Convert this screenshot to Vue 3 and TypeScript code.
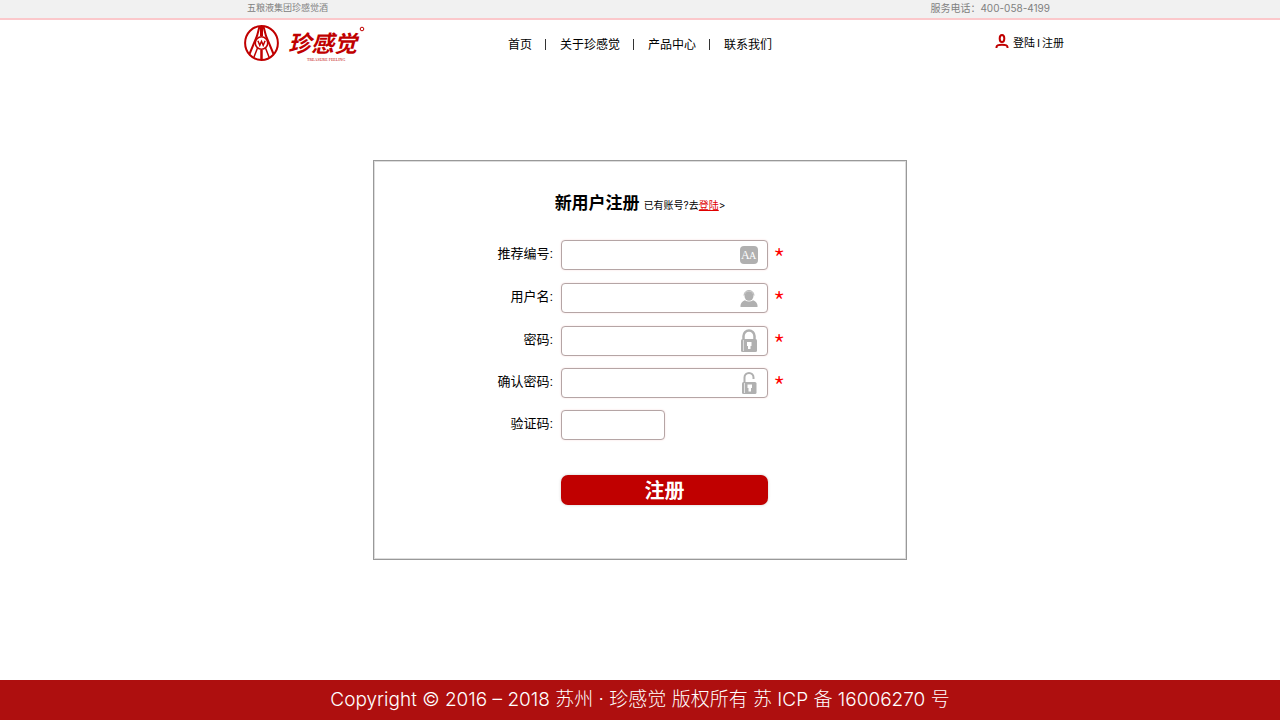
<script setup lang="ts">
import { reactive } from 'vue'

type Icon = 'code' | 'user' | 'lock' | 'unlock'
interface Field {
  id: string
  label: string
  type: string
  icon?: Icon
}

const navItems: string[] = ['首页', '关于珍感觉', '产品中心', '联系我们']

const fields: Field[] = [
  { id: 'referrer', label: '推荐编号:', type: 'text', icon: 'code' },
  { id: 'username', label: '用户名:', type: 'text', icon: 'user' },
  { id: 'password', label: '密码:', type: 'password', icon: 'lock' },
  { id: 'confirm', label: '确认密码:', type: 'password', icon: 'unlock' },
  { id: 'captcha', label: '验证码:', type: 'text' },
]

const form = reactive<Record<string, string>>({
  referrer: '',
  username: '',
  password: '',
  confirm: '',
  captcha: '',
})
</script>

<template>
  <div class="page">
    <div class="topbar">
      <span>五粮液集团珍感觉酒</span>
      <span>服务电话：400-058-4199</span>
    </div>

    <header class="header">
      <a class="logo" href="#" aria-label="珍感觉">
        <svg class="emblem" viewBox="0 0 36 38" aria-hidden="true">
          <g fill="none" stroke="#c00000">
            <ellipse cx="17.5" cy="19" rx="16.4" ry="17" stroke-width="2" />
            <path d="M15.500 2.500 13 12 5.500 30M19.500 2.500 22 12 29.500 30" stroke-width="2" />
            <path d="M17.500 3V12" stroke-width="3" />
            <path d="M13.500 24 10 33M21.500 24 25 33" stroke-width="1.500" />
            <path d="M17.500 26V35" stroke-width="2.500" />
            <circle cx="17.500" cy="19" r="6.200" stroke-width="1.500" fill="#fff" />
            <path d="m13.900 16.800 1.900 4.500 1.700-4 1.700 4 1.900-4.500" stroke-width="1.500" />
          </g>
        </svg>
        <svg class="wordmark" viewBox="0 0 78 38" aria-hidden="true">
          <text class="brand" x="1" y="28">珍感觉</text>
          <text class="brand-en" x="20" y="37">TREASURE FEELING</text>
          <circle cx="75" cy="5" r="1.800" fill="none" stroke="#c00000" stroke-width="1" />
        </svg>
      </a>
      <nav class="nav">
        <a v-for="item in navItems" :key="item" href="#">{{ item }}</a>
      </nav>
      <div class="account">
        <svg viewBox="0 0 14 15" aria-hidden="true">
          <g fill="none" stroke="#c00000" stroke-width="2">
            <ellipse cx="7" cy="4.500" rx="2.300" ry="3.500" />
            <path d="M1.500 14v-1Q1.700 10.800 7 10.800t5.500 2.200v1" />
          </g>
        </svg>
        <a href="#">登陆</a><span>I</span><a href="#">注册</a>
      </div>
    </header>

    <main class="main">
      <form class="card" @submit.prevent>
        <div class="heading">
          <h1>新用户注册</h1>
          <p>已有账号?去<a href="#">登陆</a>&gt;</p>
        </div>

        <div v-for="field in fields" :key="field.id" class="row">
          <label :for="field.id">{{ field.label }}</label>
          <div class="control" :class="{ short: !field.icon }">
            <input :id="field.id" v-model="form[field.id]" :type="field.type" :required="!!field.icon" />
            <svg v-if="field.icon" class="icon" viewBox="0 0 18 24" aria-hidden="true">
              <template v-if="field.icon === 'code'">
                <rect y="3" width="18" height="18" rx="4" fill="#b0b0b0" />
                <text x="1" y="16" class="big-a">A</text>
                <text x="9" y="16" class="small-a">A</text>
              </template>
              <g v-else-if="field.icon === 'user'" fill="#b0b0b0">
                <ellipse cx="9" cy="10" rx="4.500" ry="4.800" />
                <path d="M4 9.500Q4.500 4.600 9 4.600t5 4.900" fill="none" stroke="#b0b0b0" />
                <path d="M.5 21v-1.500q.2-3.200 4.300-5.300Q9 17 13.200 14.200q4.100 2.100 4.300 5.300V21Z" />
              </g>
              <g v-else-if="field.icon === 'lock'">
                <path d="M3.500 10.500V7a5.500 5.500 0 0 1 11 0v3.500" fill="none" stroke="#b0b0b0" stroke-width="2.500" />
                <rect x="1" y="10" width="16" height="13" rx="1.500" fill="#b0b0b0" />
                <path d="M3.500 11v11" stroke="#ddd" />
                <path d="M7 13h4.500v4h-1v3h-2.500v-3H7Z" fill="#fff" />
              </g>
              <g v-else>
                <path d="M4.500 12V6.500a4.500 4.500 0 0 1 9 0V8" fill="none" stroke="#b0b0b0" stroke-width="2" />
                <rect x="2" y="11" width="14.500" height="12" rx="1.500" fill="#b0b0b0" />
                <path d="M4.500 12v10" stroke="#e5e5e5" />
                <path d="M7.500 13.500H12V17h-1v3.500H8.500V17h-1Z" fill="#fff" />
              </g>
            </svg>
          </div>
          <span v-if="field.icon" class="required">*</span>
        </div>

        <button class="submit" type="submit">注册</button>
      </form>
    </main>

    <footer class="footer">Copyright © 2016 – 2018 苏州 · 珍感觉 版权所有 苏 ICP 备 16006270 号</footer>
  </div>
</template>

<style>
body {
  margin: 0;
  background: #fff;
}
</style>

<style scoped>
.page {
  display: flex;
  flex-direction: column;
  min-height: 100vh;
  color: #000;
  font-family: "Liberation Sans", "Noto Sans CJK SC", sans-serif;
  font-size: 12px;
}
a {
  color: inherit;
  text-decoration: none;
}
.topbar {
  display: flex;
  justify-content: space-between;
  box-sizing: border-box;
  height: 20px;
  padding: 0 calc(50% - 410px) 0 calc(50% - 393px);
  border-bottom: 2px solid #fbc8cb;
  background: #f1f1f1;
  color: #808080;
  font-family: Inter, "Noto Sans CJK SC", sans-serif;
  font-size: 10px;
  line-height: 16px;
}
.topbar span:first-child {
  font-size: 9px;
}
.header {
  display: grid;
  grid-template-columns: 1fr auto 1fr;
  align-items: center;
  height: 48px;
  padding: 0 calc(50% - 424px) 0 calc(50% - 396px);
}
.logo {
  display: flex;
  gap: 7px;
  margin-top: -3px;
}
.emblem {
  width: 36px;
  height: 38px;
}
.wordmark {
  width: 78px;
  height: 38px;
}
.brand {
  fill: #c00000;
  font-family: "Liberation Sans", "Noto Sans CJK SC", sans-serif;
  font-size: 23px;
  font-style: italic;
  font-weight: 700;
}
.brand-en {
  fill: #c00000;
  font-family: "Liberation Serif", serif;
  font-size: 4px;
}
.nav {
  display: flex;
  margin: -2px 28px 0 0;
}
.nav a + a::before {
  content: "";
  display: inline-block;
  width: 1px;
  height: 11px;
  margin: 0 14px 0 13px;
  background: #333;
  vertical-align: -1px;
}
.account {
  display: flex;
  align-items: center;
  justify-content: flex-end;
  gap: 2px;
  margin-top: -3px;
  font-size: 11px;
}
.account svg {
  width: 14px;
  height: 15px;
  margin: -2px 2px 0 0;
}
.account a {
  line-height: 16px;
}
.main {
  flex: 1;
  padding: 92px 24px 120px;
}
.card {
  box-sizing: border-box;
  max-width: 534px;
  min-height: 400px;
  margin: 0 auto;
  padding: 29px 0 52px;
  border: 1px solid #999;
  box-shadow: inset 0 0 0 1px #ddd;
}
.heading {
  display: flex;
  align-items: baseline;
  justify-content: center;
  gap: 4px;
  height: 50px;
}
h1 {
  margin: 0;
  font-size: 17px;
  line-height: 28px;
}
.heading p {
  margin: 0;
  font-family: Inter, "Noto Sans CJK SC", sans-serif;
  font-size: 10px;
}
.heading p a {
  color: #e00000;
  text-decoration: underline;
}
.row {
  display: grid;
  grid-template-columns: 179px 207px auto;
  column-gap: 8px;
  height: 30px;
  margin-bottom: 13px;
}
.row:nth-of-type(n + 4) {
  margin-bottom: 12px;
}
label {
  font-size: 13px;
  line-height: 28px;
  text-align: right;
}
.control {
  position: relative;
}
.short {
  width: 104px;
}
input {
  box-sizing: border-box;
  width: 100%;
  height: 30px;
  padding: 0 32px 0 8px;
  border: 1px solid #b5a5a5;
  border-radius: 4px;
  background: #fff;
  box-shadow: 0 0 2px #f5dada;
  font: inherit;
}
.short input {
  padding-right: 8px;
}
.icon {
  position: absolute;
  top: 3px;
  right: 10px;
  width: 18px;
  height: 24px;
  pointer-events: none;
}
.big-a,
.small-a {
  fill: #fff;
  font-family: "Liberation Serif", serif;
  font-size: 12px;
}
.small-a {
  font-size: 10px;
}
.required {
  margin-left: -3px;
  color: #f00;
  font-family: "Noto Sans CJK SC", sans-serif;
  font-size: 28px;
  font-weight: 300;
  line-height: 36px;
}
.submit {
  display: block;
  width: 207px;
  height: 30px;
  margin: 35px 0 0 187px;
  padding: 1px 0 0;
  border: 0;
  border-radius: 7px;
  background: #c00000;
  box-shadow: 0 0 3px #ccc;
  color: #fff;
  font-family: inherit;
  font-size: 20px;
  font-weight: 700;
  line-height: 30px;
}
.footer {
  min-height: 40px;
  background: #ae0f0f;
  color: #fff;
  font-family: Inter, "Noto Sans CJK SC", sans-serif;
  font-size: 19px;
  font-weight: 300;
  line-height: 40px;
  text-align: center;
}
</style>
